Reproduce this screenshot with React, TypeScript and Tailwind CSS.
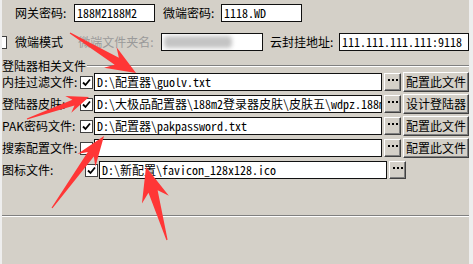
import React from "react";

const cjk = { fontFamily: '"Noto Sans CJK SC", "Liberation Sans", sans-serif' };
const mono = { fontFamily: '"Noto Sans Mono CJK SC", "Liberation Mono", "Noto Sans CJK SC", monospace' };

type Arrow = { from: [number, number]; to: [number, number]; head: number; width: number };

const arrows: Arrow[] = [
  { from: [70, 33], to: [136, 73], head: 30, width: 24 },
  { from: [27, 119], to: [89, 97], head: 22, width: 18 },
  { from: [52, 208], to: [104, 136], head: 30, width: 22 },
  { from: [167, 240], to: [146, 167], head: 34, width: 28 },
];

function arrowPoints({ from, to, head, width }: Arrow) {
  const [fx, fy] = from;
  const [tx, ty] = to;
  const len = Math.hypot(tx - fx, ty - fy);
  const ux = (tx - fx) / len;
  const uy = (ty - fy) / len;
  const nx = -uy;
  const ny = ux;
  const bx = tx - ux * head;
  const by = ty - uy * head;
  const kx = tx - ux * head * 0.75;
  const ky = ty - uy * head * 0.75;
  const sw = width * 0.17;
  const pts = [
    [fx + nx * 0.6, fy + ny * 0.6],
    [kx + nx * sw, ky + ny * sw],
    [bx + (nx * width) / 2, by + (ny * width) / 2],
    [tx, ty],
    [bx - (nx * width) / 2, by - (ny * width) / 2],
    [kx - nx * sw, ky - ny * sw],
    [fx - nx * 0.6, fy - ny * 0.6],
  ];
  return pts.map((p) => p.join(",")).join(" ");
}

const Check = ({ checked = true }: { checked?: boolean }) => (
  <div className="w-[13px] h-[13px] shrink-0 bg-white border border-[#404040] flex items-center justify-center">
    {checked && (
      <svg width="9" height="9" viewBox="0 0 9 9">
        <path d="M1 4.5 L3.5 7 L8 1.5" stroke="#000" strokeWidth="1.8" fill="none" />
      </svg>
    )}
  </div>
);

const Field = ({ value = "", className = "" }: { value?: string; className?: string }) => (
  <div
    className={`h-[18px] bg-white border border-[#111] shrink-0 overflow-hidden whitespace-nowrap text-[12px] leading-[16px] pl-[2px] text-black ${className}`}
    style={mono}
  >
    {value}
  </div>
);

const Btn = ({ children, className = "" }: { children?: React.ReactNode; className?: string }) => (
  <div
    className={`shrink-0 bg-[#d4d0c8] border border-t-white border-l-white border-r-[#404040] border-b-[#404040] shadow-[inset_-1px_-1px_0_#808080] flex items-center justify-center text-[12px] text-black whitespace-nowrap ${className}`}
  >
    {children}
  </div>
);

const Dots = () => (
  <svg width="10" height="4" viewBox="0 0 10 4" className="mb-[4px]">
    <rect x="0" y="1" width="2" height="2" fill="#000" />
    <rect x="4" y="1" width="2" height="2" fill="#000" />
    <rect x="8" y="1" width="2" height="2" fill="#000" />
  </svg>
);

const rows = [
  { label: "内挂过滤文件:", value: "D:\\配置器\\guolv.txt", action: "配置此文件", checked: true },
  { label: "登陆器皮肤:", value: "D:\\大极品配置器\\188m2登录器皮肤\\皮肤五\\wdpz.188m2", action: "设计登陆器", checked: true },
  { label: "PAK密码文件:", value: "D:\\配置器\\pakpassword.txt", action: "配置此文件", checked: true },
  { label: "搜索配置文件:", value: "", action: "配置此文件", checked: false },
  { label: "图标文件:", value: "D:\\新配置\\favicon_128x128.ico", action: "", checked: true },
];

export default function App() {
  return (
    <div className="relative w-[473px] h-[264px] bg-[#eeeeee] overflow-hidden text-[12px] text-black" style={cjk}>
      <div className="ml-[2px] w-[467px] h-full bg-[#d4d0c8] overflow-hidden flex flex-col">
        <div className="flex items-center h-[18px] mt-[4px]">
          <span className="ml-[13px] w-[59px]">网关密码:</span>
          <Field value="188M2188M2" className="w-[81px]" />
          <span className="ml-[8px] w-[58px]">微端密码:</span>
          <Field value="1118.WD" className="w-[81px]" />
        </div>

        <div className="flex items-center h-[18px] mt-[11px]">
          <div className="ml-[-8px]">
            <Check checked={false} />
          </div>
          <span className="ml-[8px] w-[66px]">微端模式</span>
          <span className="w-[86px] text-[#9a9a9a]">微端文件夹名:</span>
          <div className="relative h-[18px] w-[107px] bg-white border border-[#111] overflow-hidden">
            <div className="absolute left-[2px] top-[2px] w-[68px] h-[12px] bg-[#c4c4c4] blur-[2px] rounded" />
          </div>
          <span className="ml-[7px] w-[72px]">云封挂地址:</span>
          <Field value="111.111.111.111:9118" className="w-[130px]" />
        </div>

        <div className="flex items-center mt-[8px] h-[14px]">
          <span className="leading-[14px] whitespace-nowrap">登陆器相关文件</span>
          <div className="flex-1 ml-[1px] flex flex-col">
            <div className="h-px bg-[#808080]" />
            <div className="h-px bg-white" />
          </div>
        </div>

        <div className="flex flex-col gap-[4px]">
          {rows.map((r) => (
            <div key={r.label} className="flex items-center h-[18px]">
              <span className="w-[83px] whitespace-nowrap">{r.label}</span>
              <Check checked={r.checked} />
              <Field value={r.value} className="w-[288px] ml-[1px]" />
              <Btn className="w-[17px] h-[18px] ml-[2px]">
                <Dots />
              </Btn>
              {r.action && <Btn className="w-[66px] h-[20px] ml-[2px]">{r.action}</Btn>}
            </div>
          ))}
        </div>

        <div className="mt-[36px]">
          <div className="h-px bg-[#808080]" />
          <div className="h-px bg-white" />
        </div>
      </div>

      <svg className="absolute top-0 left-0 pointer-events-none" width="473" height="264">
        {arrows.map((a, i) => (
          <polygon key={i} points={arrowPoints(a)} fill="#ff3636" />
        ))}
      </svg>
    </div>
  );
}
